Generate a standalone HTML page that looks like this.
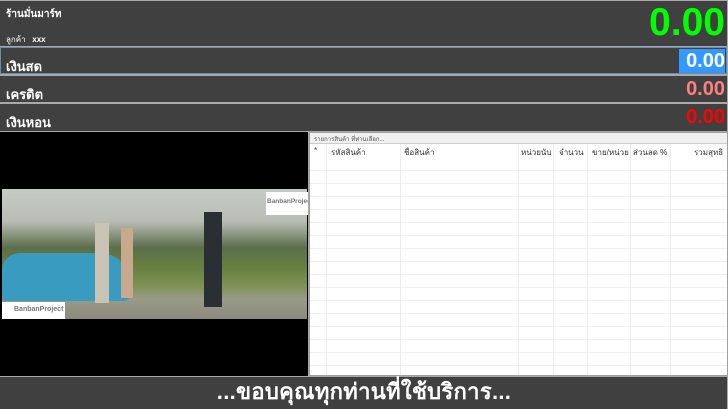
<!DOCTYPE html>
<html><head><meta charset="utf-8"><style>
*{margin:0;padding:0;box-sizing:border-box}
body{width:728px;height:409px;background:#a9a9a9;position:relative;overflow:hidden;font-family:"Liberation Sans","Noto Sans CJK SC",sans-serif}
.p{position:absolute;background:#404040}
.t{position:absolute;color:#fff;font-weight:bold;white-space:nowrap}
.grid{position:absolute;left:309px;top:132px;width:419px;height:244px;background:#f0f0f0;border:1px solid #a0a0a0}
.v{position:absolute;top:11px;bottom:0;width:1px;background:#ececec}
.h{position:absolute;left:0;right:0;height:1px;background:#efefef}
.hd{position:absolute;top:13px;font-size:8px;color:#333}
</style></head><body>
<div class="p" style="left:0;top:1px;width:727px;height:45px"></div>
<div class="t" style="left:6px;top:7px;font-size:10px">ร้านมั่นมาร์ท</div>
<div class="t" style="left:6px;top:33px;font-size:8px;font-weight:normal">ลูกค้า&nbsp;&nbsp;&nbsp;<b>xxx</b></div>
<div class="t" style="right:3px;top:1px;font-size:39px;color:#00ff00;line-height:44px">0.00</div>

<div class="p" style="left:0;top:47px;width:727px;height:27px;border:1px solid #6a8cad"></div>
<div class="t" style="left:6px;top:56px;font-size:13px">เงินสด</div>
<div style="position:absolute;left:679px;top:49px;width:46px;height:24px;background:#3399ff"></div>
<div class="t" style="right:3px;top:49px;font-size:20px;line-height:24px">0.00</div>

<div class="p" style="left:0;top:76px;width:727px;height:26px"></div>
<div class="t" style="left:6px;top:84px;font-size:13px">เครดิต</div>
<div class="t" style="right:3px;top:77px;font-size:20px;line-height:24px;color:#ff8080">0.00</div>

<div class="p" style="left:0;top:104px;width:727px;height:27px"></div>
<div class="t" style="left:6px;top:112px;font-size:13px">เงินหอน</div>
<div class="t" style="right:3px;top:105px;font-size:20px;line-height:24px;color:#ff0000">0.00</div>

<div style="position:absolute;left:0;top:132px;width:308px;height:244px;background:#000"></div>
<div style="position:absolute;left:2px;top:189px;width:305px;height:130px;background:linear-gradient(180deg,#c6cbc6 0%,#b9bdb5 25%,#5c6e4c 45%,#66803f 60%,#7f9257 75%,#9a9a88 85%,#8b8a7e 100%)"></div>
<div style="position:absolute;left:2px;top:253px;width:128px;height:48px;background:#3a9bc1;border-radius:18px 30px 6px 4px"></div>
<div style="position:absolute;left:95px;top:223px;width:14px;height:80px;background:#c8c3b5"></div>
<div style="position:absolute;left:121px;top:228px;width:12px;height:70px;background:#c9a98e"></div>
<div style="position:absolute;left:204px;top:212px;width:18px;height:95px;background:#2a2f33"></div>
<div style="position:absolute;left:266px;top:192px;width:42px;height:23px;background:#fff;font-size:6.5px;font-weight:bold;color:#777;padding:6px 0 0 1px;overflow:hidden;white-space:nowrap">BanbanProject</div>
<div style="position:absolute;left:2px;top:302px;width:63px;height:17px;background:#fff;font-size:7px;font-weight:bold;color:#777;padding:4px 0 0 12px">BanbanProject</div>

<div class="grid">
<div style="position:absolute;left:0;top:0;right:0;height:11px;background:#f0f0f0;border-bottom:1px solid #ccc;font-size:6px;color:#555;padding:1px 4px">รายการสินค้า ที่ท่านเลือก...</div>
<div style="position:absolute;left:0;top:11px;right:0;bottom:0;background:#fff"></div>
<div class="h" style="top:37px"></div><div class="h" style="top:50px"></div><div class="h" style="top:63px"></div><div class="h" style="top:76px"></div><div class="h" style="top:89px"></div><div class="h" style="top:102px"></div><div class="h" style="top:115px"></div><div class="h" style="top:128px"></div><div class="h" style="top:141px"></div><div class="h" style="top:154px"></div><div class="h" style="top:167px"></div><div class="h" style="top:180px"></div><div class="h" style="top:193px"></div><div class="h" style="top:206px"></div><div class="h" style="top:219px"></div><div class="h" style="top:232px"></div>
<div class="v" style="left:16px"></div><div class="v" style="left:90px"></div><div class="v" style="left:208px"></div><div class="v" style="left:243px"></div><div class="v" style="left:277px"></div><div class="v" style="left:320px"></div><div class="v" style="left:360px"></div>
<div class="hd" style="left:4px">*</div>
<div class="hd" style="left:21px">รหัสสินค้า</div>
<div class="hd" style="left:94px">ชื่อสินค้า</div>
<div class="hd" style="left:211px">หน่วยนับ</div>
<div class="hd" style="left:249px">จำนวน</div>
<div class="hd" style="left:282px">ขาย/หน่วย</div>
<div class="hd" style="left:323px">ส่วนลด %</div>
<div class="hd" style="left:384px">รวมสุทธิ</div>
</div>

<div class="p" style="left:0;top:377px;width:727px;height:32px"></div>
<div class="t" style="left:0;width:728px;text-align:center;top:378px;font-size:22px;line-height:28px;letter-spacing:0.3px">...ขอบคุณทุกท่านที่ใช้บริการ...</div>
</body></html>
